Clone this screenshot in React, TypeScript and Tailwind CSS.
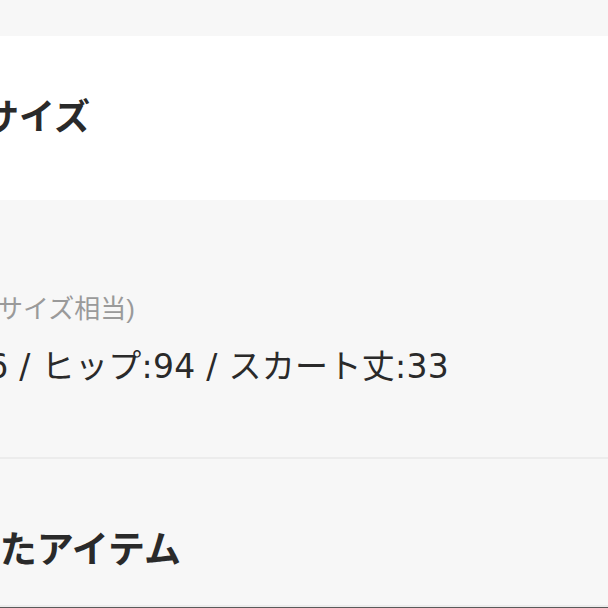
import React from 'react';

const font = "font-['Liberation_Sans','Noto_Sans_CJK_JP',sans-serif]";

export default function App() {
    return (
        <div className={`w-[608px] h-[608px] overflow-hidden bg-[#f7f7f7] ${font}`}>
            <div className="h-[36px] bg-[#f7f7f7]"></div>

            <section className="h-[164px] bg-white flex items-center">
                <div className="w-[90px] flex justify-end whitespace-nowrap">
                    <h2 className="text-[36px] leading-[44px] font-bold text-[#2a2a2a]">商品のサイズ</h2>
                </div>
            </section>

            <section className="h-[259px] bg-[#f7f7f7] border-b-2 border-[#ececec] pt-[93px]">
                <div className="w-[135px] flex justify-end whitespace-nowrap">
                    <p className="text-[26px] leading-[32px] text-[#9a9a9a]">サイズ：S (Mサイズ相当)</p>
                </div>
                <div className="w-[449px] flex justify-end whitespace-nowrap mt-[22px]">
                    <p className="font-['DejaVu_Sans','Noto_Sans_CJK_JP',sans-serif] text-[33px] leading-[40px] tracking-[0.3px] text-[#2a2a2a]">
                        ウエスト:66 / ヒップ:94 / スカート丈:33
                    </p>
                </div>
            </section>

            <section className="h-[148px] bg-[#f7f7f7] border-b-2 border-[#ececec] flex items-center pt-[38px]">
                <div className="w-[181px] flex justify-end whitespace-nowrap">
                    <h2 className="text-[37px] leading-[44px] font-bold text-[#2a2a2a]">最近見たアイテム</h2>
                </div>
            </section>
            <div className="h-[1px] bg-[#5a5a5a]"></div>
        </div>
    );
}
